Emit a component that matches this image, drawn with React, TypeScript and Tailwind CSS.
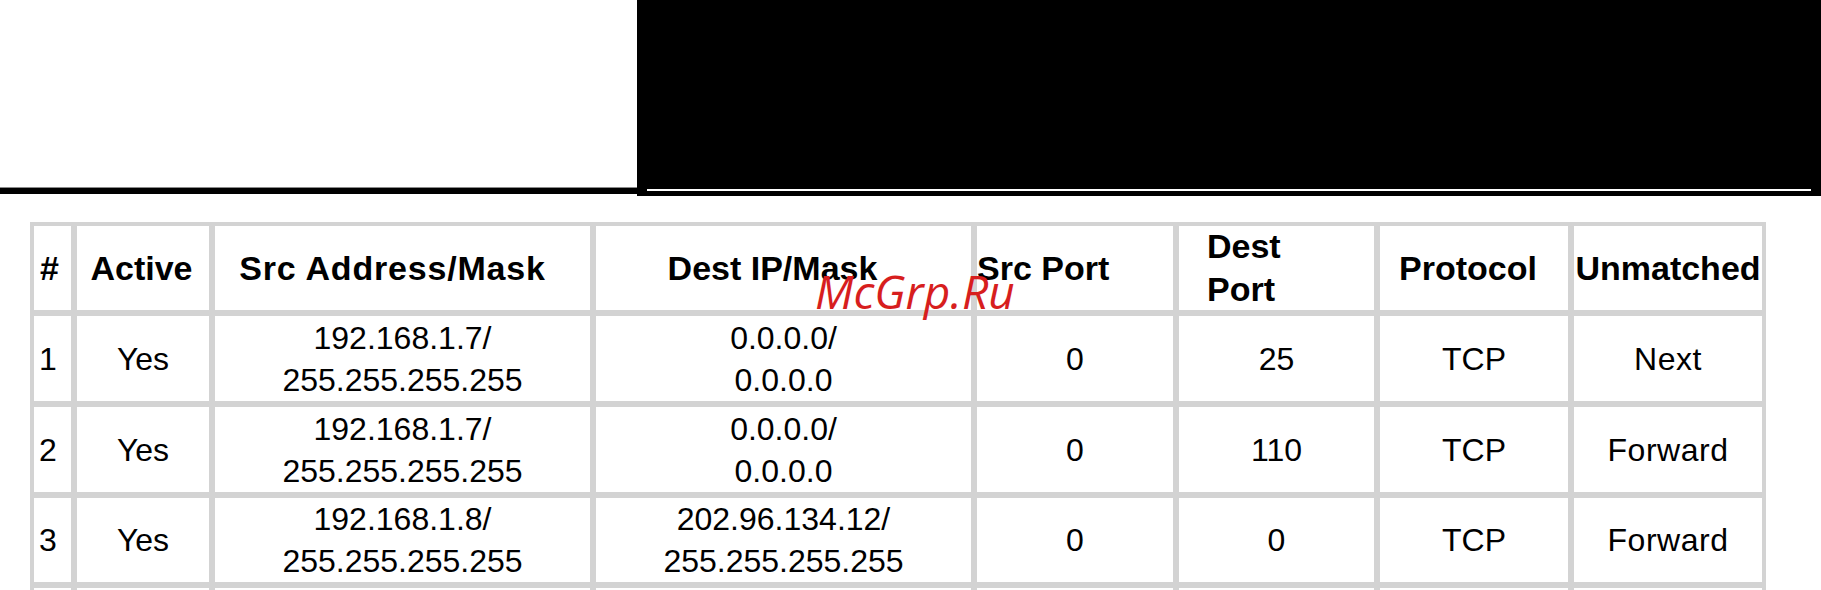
import React from "react";

const headerCls =
  "bg-white flex items-center font-bold text-[34px] leading-[43px] text-black";
const cellCls =
  "bg-white flex items-center justify-center text-center text-[32px] leading-[42px] text-black";

type Row = { n: string; active: string; src: [string, string]; dst: [string, string]; sp: string; dp: string; proto: string; un: string };

const rows: Row[] = [
  { n: "1", active: "Yes", src: ["192.168.1.7/", "255.255.255.255"], dst: ["0.0.0.0/", "0.0.0.0"], sp: "0", dp: "25", proto: "TCP", un: "Next" },
  { n: "2", active: "Yes", src: ["192.168.1.7/", "255.255.255.255"], dst: ["0.0.0.0/", "0.0.0.0"], sp: "0", dp: "110", proto: "TCP", un: "Forward" },
  { n: "3", active: "Yes", src: ["192.168.1.8/", "255.255.255.255"], dst: ["202.96.134.12/", "255.255.255.255"], sp: "0", dp: "0", proto: "TCP", un: "Forward" },
];

export default function App() {
  return (
    <div
      className="relative w-[1821px] bg-white overflow-hidden"
      style={{ fontFamily: '"Liberation Sans", Arial, sans-serif' }}
    >
      {/* top band */}
      <div className="flex h-[196px]">
        <div className="w-[637px] flex flex-col justify-end pb-[2px]">
          <div className="h-[7px] bg-black border-t border-[#8a8a8a]" />
        </div>
        <div className="flex-1 bg-black pt-[189px] px-[10px]">
          <div className="h-[2px] bg-white" />
        </div>
      </div>

      {/* table */}
      <div className="ml-[30px] mt-[26px] w-[1736px] bg-[#d3d3d3] p-[4px] grid grid-cols-[37px_132px_375px_375px_196px_195px_188px_188px] grid-rows-[84px_85px_85px_84px_84px] gap-[6px]">
        <div className={`${headerCls} pl-[6px]`}>#</div>
        <div className={`${headerCls} justify-center pr-[3px]`}>Active</div>
        <div className={`${headerCls} justify-center pr-[20px] tracking-[0.8px]`}>Src Address/Mask</div>
        <div className={`${headerCls} justify-center pr-[22px]`}>Dest IP/Mask</div>
        <div className={`${headerCls} justify-start`}>Src Port</div>
        <div className={`${headerCls} justify-start pl-[28px]`}>
          <span>
            Dest
            <br />
            Port
          </span>
        </div>
        <div className={`${headerCls} justify-center pr-[12px]`}>Protocol</div>
        <div className={`${headerCls} justify-center whitespace-nowrap`}>Unmatched</div>

        {rows.map((r) => (
          <React.Fragment key={r.n}>
            <div className="bg-white flex items-center pl-[5px] text-[32px] leading-[42px] text-black">{r.n}</div>
            <div className={cellCls}>{r.active}</div>
            <div className={cellCls}>
              <span>
                {r.src[0]}
                <br />
                {r.src[1]}
              </span>
            </div>
            <div className={cellCls}>
              <span>
                {r.dst[0]}
                <br />
                {r.dst[1]}
              </span>
            </div>
            <div className={cellCls}>{r.sp}</div>
            <div className={cellCls}>{r.dp}</div>
            <div className={cellCls}>{r.proto}</div>
            <div className={`${cellCls} tracking-[0.5px]`}>{r.un}</div>
          </React.Fragment>
        ))}
        {Array.from({ length: 8 }).map((_, i) => (
          <div key={i} className="bg-white" />
        ))}
      </div>

      {/* watermark */}
      <div
        className="absolute left-[815px] top-[268px] text-[46px] leading-none italic text-[#d71e1e]"
        style={{ fontFamily: '"Open Sans", "Noto Sans", sans-serif' }}
      >
        McGrp.Ru
      </div>
    </div>
  );
}
